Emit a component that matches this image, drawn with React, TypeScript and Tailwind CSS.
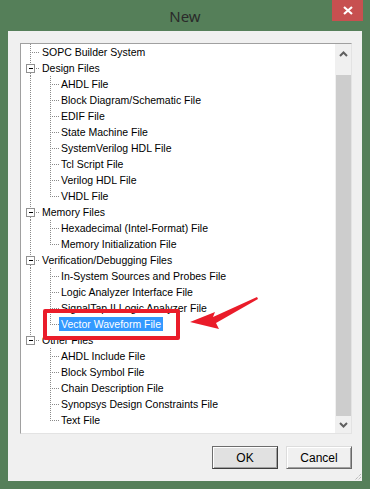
import React from 'react';

type Kind = 'rootLeaf' | 'folder' | 'lastFolder' | 'child' | 'lastChild';

interface Item {
  label: string;
  kind: Kind;
  underLast?: boolean;
  selected?: boolean;
}

const items: Item[] = [
  { label: 'SOPC Builder System', kind: 'rootLeaf' },
  { label: 'Design Files', kind: 'folder' },
  { label: 'AHDL File', kind: 'child' },
  { label: 'Block Diagram/Schematic File', kind: 'child' },
  { label: 'EDIF File', kind: 'child' },
  { label: 'State Machine File', kind: 'child' },
  { label: 'SystemVerilog HDL File', kind: 'child' },
  { label: 'Tcl Script File', kind: 'child' },
  { label: 'Verilog HDL File', kind: 'child' },
  { label: 'VHDL File', kind: 'lastChild' },
  { label: 'Memory Files', kind: 'folder' },
  { label: 'Hexadecimal (Intel-Format) File', kind: 'child' },
  { label: 'Memory Initialization File', kind: 'lastChild' },
  { label: 'Verification/Debugging Files', kind: 'folder' },
  { label: 'In-System Sources and Probes File', kind: 'child' },
  { label: 'Logic Analyzer Interface File', kind: 'child' },
  { label: 'SignalTap II Logic Analyzer File', kind: 'child' },
  { label: 'Vector Waveform File', kind: 'lastChild', selected: true },
  { label: 'Other Files', kind: 'lastFolder' },
  { label: 'AHDL Include File', kind: 'child', underLast: true },
  { label: 'Block Symbol File', kind: 'child', underLast: true },
  { label: 'Chain Description File', kind: 'child', underLast: true },
  { label: 'Synopsys Design Constraints File', kind: 'child', underLast: true },
  { label: 'Text File', kind: 'lastChild', underLast: true },
];

const dot = { stroke: '#8a8a8a', strokeWidth: 1, strokeDasharray: '1 1', shapeRendering: 'crispEdges' as const };

function Connector({ item }: { item: Item }) {
  const isRoot = item.kind === 'rootLeaf' || item.kind === 'folder' || item.kind === 'lastFolder';
  return (
    <svg width={isRoot ? 21 : 40} height={16} className="shrink-0">
      {item.kind === 'rootLeaf' && (
        <>
          <line x1={9.5} y1={0} x2={9.5} y2={16} {...dot} />
          <line x1={11} y1={8.5} x2={19} y2={8.5} {...dot} />
        </>
      )}
      {(item.kind === 'folder' || item.kind === 'lastFolder') && (
        <>
          <line x1={9.5} y1={0} x2={9.5} y2={4} {...dot} />
          {item.kind === 'folder' && <line x1={9.5} y1={13} x2={9.5} y2={16} {...dot} />}
          <line x1={15} y1={8.5} x2={19} y2={8.5} {...dot} />
          <rect x={5.5} y={4.5} width={8} height={8} fill="#fff" stroke="#919191" shapeRendering="crispEdges" />
          <line x1={7.5} y1={8.5} x2={11.5} y2={8.5} stroke="#000" shapeRendering="crispEdges" />
        </>
      )}
      {!isRoot && (
        <>
          {!item.underLast && <line x1={9.5} y1={0} x2={9.5} y2={16} {...dot} />}
          <line x1={29.5} y1={0} x2={29.5} y2={item.kind === 'lastChild' ? 9 : 16} {...dot} />
          <line x1={31} y1={8.5} x2={39} y2={8.5} {...dot} />
        </>
      )}
    </svg>
  );
}

function Chevron({ up }: { up?: boolean }) {
  return (
    <svg width={9} height={6} viewBox="0 0 9 6">
      <path
        d={up ? 'M1 5 L4.5 1.5 L8 5' : 'M1 1 L4.5 4.5 L8 1'}
        fill="none"
        stroke="#606060"
        strokeWidth={2}
      />
    </svg>
  );
}

export default function App() {
  return (
    <div className="w-[370px] h-[489px] bg-[#557f59] flex flex-col overflow-hidden" style={{ fontFamily: '"Liberation Sans", Arial, sans-serif' }}>
      {/* title bar */}
      <div className="relative h-[31px] shrink-0 flex items-center justify-center">
        <span className="text-[15px] text-[#2a2a2a] pt-[1px]" style={{ fontFamily: '"Noto Sans", "Open Sans", sans-serif' }}>New</span>
        <div className="absolute right-[7px] top-0 w-[31px] h-[21px] bg-[#c75050] flex items-center justify-center">
          <svg width={10} height={9} viewBox="0 0 10 9">
            <path d="M1 1 L9 8 M9 1 L1 8" stroke="#fff" strokeWidth={2.2} />
          </svg>
        </div>
      </div>

      {/* client area */}
      <div className="relative mx-[8px] h-[450px] bg-[#f0f0f0] pt-[12px] pl-[12px] pr-[10px] flex flex-col">
        <div className="w-[332px] h-[391px] bg-white border-t border-l border-[#a0a0a0] border-r border-b border-r-[#e3e3e3] border-b-[#e3e3e3] flex">
          <div className="flex-1 flex flex-col overflow-hidden text-[10.5px] text-black">
            {items.map((item, i) => (
              <div key={i} className="h-[16px] flex items-center shrink-0">
                <Connector item={item} />
                <span
                  className={`h-[14px] leading-[14px] px-[2px] -ml-[2px] whitespace-nowrap ${
                    item.selected ? 'bg-[#3399ff] text-white' : ''
                  }`}
                >
                  {item.label}
                </span>
              </div>
            ))}
          </div>
          <div className="w-[16px] bg-[#f0f0f0] flex flex-col items-center">
            <div className="h-[31px] flex items-start justify-center pt-[7px]">
              <Chevron up />
            </div>
            <div className="w-[15px] h-[341px] bg-[#cdcdcd]" />
            <div className="flex-1 flex items-center justify-center">
              <Chevron />
            </div>
          </div>
        </div>

        <div className="mt-[12px] flex justify-end gap-[8px] text-[12px]">
          <button className="w-[66px] h-[23px] bg-[#e1e1e1] border border-[#6d6d6d] border-r-[#3c3c3c] border-b-[#3c3c3c] shadow-[inset_1px_1px_0_#ffffff,inset_-1px_-1px_0_#a0a0a0] text-black">
            OK
          </button>
          <button className="w-[66px] h-[23px] bg-[#f0f0f0] border border-[#dcdcdc] border-r-[#696969] border-b-[#696969] shadow-[inset_1px_1px_0_#ffffff,inset_-1px_-1px_0_#a0a0a0] text-black">
            Cancel
          </button>
        </div>

        {/* resize grip */}
        <svg className="absolute right-0 bottom-0" width={9} height={9}>
          <path d="M8 2 L2 8 M8 5 L5 8 M8 8 L8 8" stroke="#a0a0a0" strokeWidth={1} strokeDasharray="1 1" />
        </svg>

        {/* annotation: red box + arrow */}
        <div className="absolute left-[35px] top-[278px] w-[137px] h-[31px] border-[4px] border-[#ea1c2a] rounded-[2px]" />
        <svg className="absolute left-[175px] top-[260px]" width={90} height={45}>
          <path d="M74 6 L30 26 L32 21 L7 31 L36 38 L33 32 L75 8 Z" fill="#ea1c2a" />
        </svg>
      </div>
    </div>
  );
}
